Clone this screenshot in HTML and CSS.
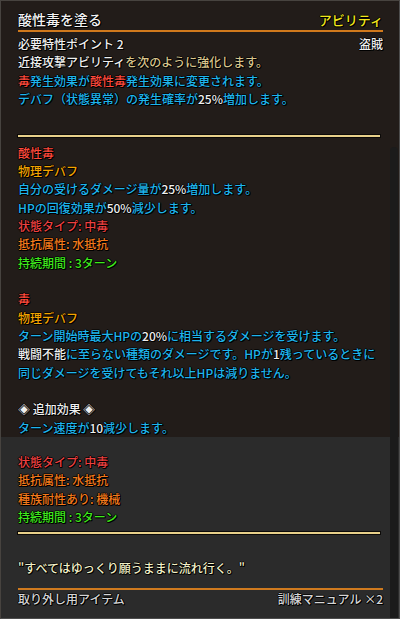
FILE: index.html
```html
<!DOCTYPE html>
<html lang="ja">
<head>
<meta charset="utf-8">
<title>酸性毒を塗る</title>
<link rel="stylesheet" href="styles.css">
</head>
<body>
<div class="tip">
  <div class="title-row">
    <span class="title">酸性毒を塗る</span>
    <span class="kind">アビリティ</span>
  </div>
  <div class="rule-orange"></div>
  <div class="head-lines">
    <div class="split"><span class="w">必要特性ポイント 2</span><span class="w">盗賊</span></div>
    <p><span class="w">近接攻撃アビリティ</span><span class="tan">を次のように強化します。</span></p>
    <p><span class="red">毒</span><span class="cyan">発生効果が</span><span class="red">酸性毒</span><span class="cyan">発生効果に変更されます。</span></p>
    <p><span class="cyan">デバフ（状態異常）の発生確率が</span><span class="w">25%</span><span class="cyan">増加します。</span></p>
  </div>
  <div class="rule-beige rule-top"></div>
  <div class="body-lines">
    <p class="red">酸性毒</p>
    <p class="amber">物理デバフ</p>
    <p><span class="cyan">自分の受けるダメージ量が</span><span class="w">25%</span><span class="cyan">増加します。</span></p>
    <p><span class="cyan">HPの回復効果が</span><span class="w">50%</span><span class="cyan">減少します。</span></p>
    <p class="state">状態タイプ: 中毒</p>
    <p class="orange">抵抗属性: 水抵抗</p>
    <p class="green">持続期間 : 3ターン</p>
    <p class="blank"></p>
    <p class="red">毒</p>
    <p class="amber">物理デバフ</p>
    <p><span class="cyan">ターン開始時最大HPの</span><span class="w">20%</span><span class="cyan">に相当するダメージを受けます。</span></p>
    <p><span class="w">戦闘不能</span><span class="cyan">に至らない種類のダメージです。HPが</span><span class="w">1</span><span class="cyan">残っているときに</span></p>
    <p class="cyan">同じダメージを受けてもそれ以上HPは減りません。</p>
    <p class="blank"></p>
    <p class="w">◈ 追加効果 ◈</p>
    <p><span class="cyan">ターン速度が</span><span class="w">10</span><span class="cyan">減少します。</span></p>
  </div>
  <div class="lower">
    <div class="lower-lines">
      <p class="state">状態タイプ: 中毒</p>
      <p class="orange">抵抗属性: 水抵抗</p>
      <p class="orange">種族耐性あり: 機械</p>
      <p class="green">持続期間 : 3ターン</p>
    </div>
    <div class="rule-beige rule-bottom"></div>
    <p class="quote">"すべてはゆっくり願うままに流れ行く。"</p>
    <div class="rule-orange rule-foot"></div>
    <div class="split footer"><span>取り外し用アイテム</span><span>訓練マニュアル ×2</span></div>
  </div>
  <div class="scrollbar"></div>
</div>
</body>
</html>
```

FILE: styles.css
```css
* { box-sizing: border-box; }
html, body { margin: 0; padding: 0; background: #1e1a18; }
body {
  font-family: "Noto Sans CJK JP", "Noto Sans", sans-serif;
  font-size: 12px;
  font-weight: 500;
  color: #ececec;
}
p { margin: 0; }

.tip {
  position: relative;
  width: 400px;
  height: 619px;
  border: 1px solid #47433f;
  border-right-color: #4d4d4d;
  border-bottom-color: #4d4d4d;
  background: #221c19;
  display: flex;
  flex-direction: column;
  overflow: hidden;
  text-shadow: 1px 1px 0 #000, -1px 0 0 rgba(0,0,0,0.7), 0 -1px 0 rgba(0,0,0,0.7), 1px 0 0 #000, 0 1px 0 #000;
}

.title-row {
  display: flex;
  justify-content: space-between;
  align-items: baseline;
  padding: 8px 16px 0 17px;
  height: 29px;
  line-height: 21px;
}
.title { font-size: 14px; color: #f2f2f2; }
.kind { font-size: 13px; color: #f2e61c; }

.rule-orange {
  height: 2px;
  margin: 0 16px 0 17px;
  background: #d0791c;
}

.head-lines {
  padding: 3px 16px 0 17px;
  line-height: 18.4px;
}
.split {
  display: flex;
  justify-content: space-between;
}

.rule-beige {
  height: 2px;
  margin: 0 19px 0 17px;
  background: #e8d08a;
  box-shadow: 0 0 0 1px #0c0a08;
}
.rule-top { margin-top: 26px; }

.body-lines {
  padding: 7px 16px 0 17px;
  line-height: 18.33px;
}
.blank { height: 18.33px; }

.lower {
  flex: 1;
  background: #2b2b2b;
  padding-top: 16px;
}
.lower-lines {
  padding: 0 16px 0 17px;
  line-height: 18.33px;
}
.rule-bottom { margin-top: 6px; }
.quote {
  margin-top: 25px;
  padding: 0 16px 0 17px;
  line-height: 18.33px;
  color: #f2f0c8;
}
.rule-foot { margin-top: 10px; background: #cf7a1e; }
.footer {
  padding: 0 16px 0 17px;
  line-height: 18.33px;
  color: #d4d4d4;
}

.w { color: #efefef; }
.tan { color: #d8c48c; }
.red { color: #ff4a3c; }
.cyan { color: #1eb4ec; }
.amber { color: #f2a400; }
.state { color: #ec4040; }
.orange { color: #f27a1c; }
.green { color: #3ee81c; }

.scrollbar {
  position: absolute;
  top: 146px;
  right: 1px;
  bottom: 0;
  width: 8px;
  background: #1b1b1b;
  border-radius: 5px 5px 0 0;
}
```
